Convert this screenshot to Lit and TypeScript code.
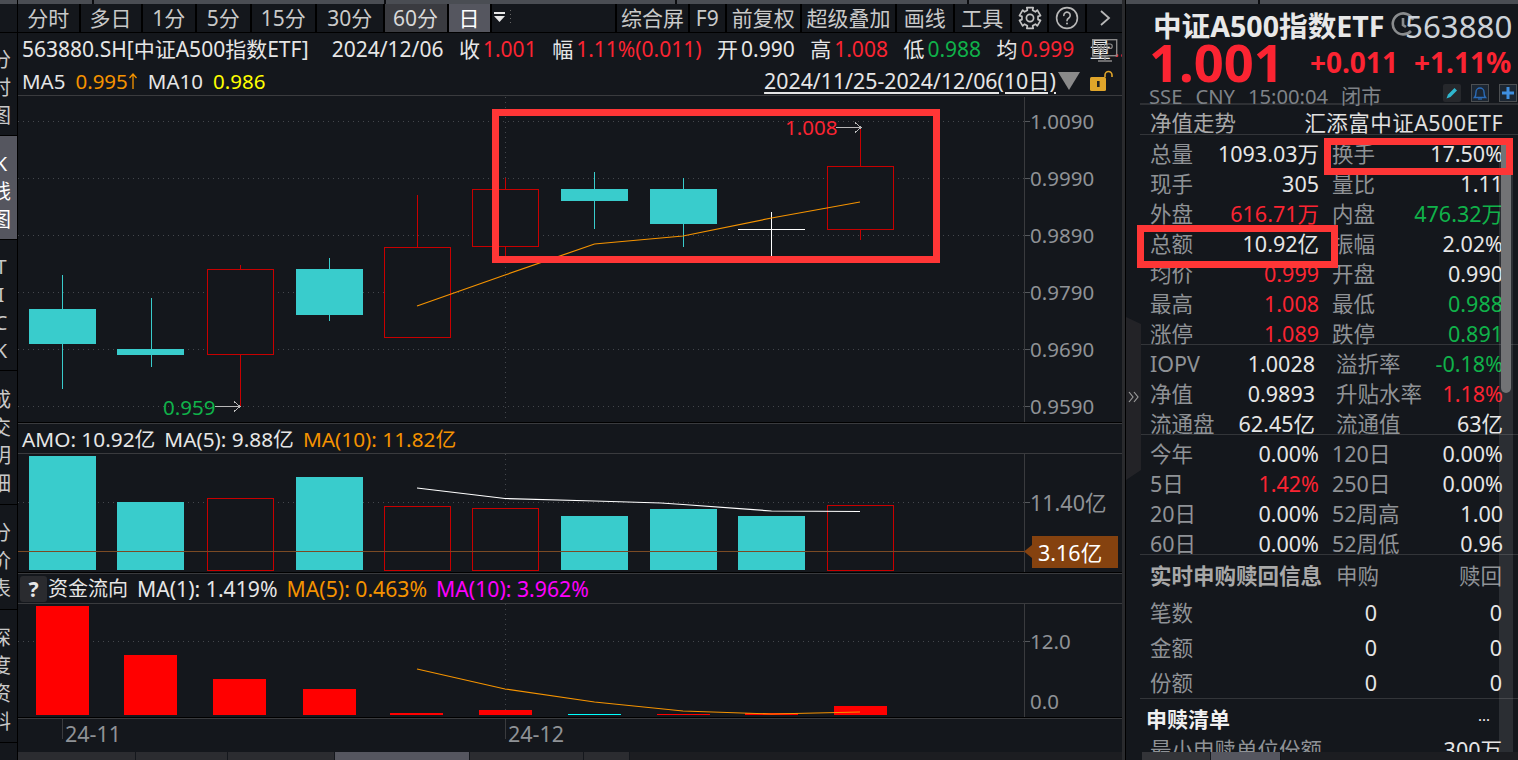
import { LitElement, html, css, svg } from "lit";
import { customElement } from "lit/decorators.js";

const RED = "#c80000";
const TEAL = "#39cccc";
const CX = [62.5, 151, 240, 329.5, 417, 505.5, 594.5, 683.5, 771.5, 860.5];
type Candle = { kind: string; top: number; bot: number; hi: number; lo: number };
const candles: Candle[] = [
  { kind: "t", top: 309, bot: 344, hi: 275, lo: 389 },
  { kind: "t", top: 349, bot: 355, hi: 298, lo: 367 },
  { kind: "r", top: 269, bot: 354, hi: 265, lo: 407 },
  { kind: "t", top: 269, bot: 315, hi: 258, lo: 321 },
  { kind: "r", top: 247, bot: 337, hi: 195, lo: 337 },
  { kind: "r", top: 189, bot: 246, hi: 178, lo: 258 },
  { kind: "t", top: 189, bot: 201, hi: 172, lo: 229 },
  { kind: "t", top: 189, bot: 224, hi: 178, lo: 247 },
  { kind: "w", top: 229, bot: 229, hi: 212, lo: 256 },
  { kind: "r", top: 166, bot: 229, hi: 127, lo: 240 },
];
const vols: [string, number][] = [
  ["t", 456], ["t", 502], ["r", 498], ["t", 477], ["r", 506], ["r", 508], ["t", 516], ["t", 509], ["t", 516], ["r", 505],
];
const funds: [string, number][] = [
  ["#ff0000", 606], ["#ff0000", 655], ["#ff0000", 679], ["#ff0000", 689], ["#ff0000", 713],
  ["#ff0000", 710], ["#00ffff", 714], ["#ff0000", 714], ["#ff0000", 713], ["#ff0000", 706],
];
const tabsL: [string, number, string][] = [
  ["分时", 62.5, ""], ["多日", 62, ""], ["1分", 54.5, ""], ["5分", 54.5, ""], ["15分", 65.5, ""], ["30分", 67.5, ""], ["60分", 64, "hover"], ["日", 43, "sel"],
];
const tabsR: [string, number][] = [
  ["综合屏", 75], ["F9", 36.5], ["前复权", 75.5], ["超级叠加", 95], ["画线", 57.5], ["工具", 57.5],
];
const sideItems: [string[], number, boolean][] = [
  [["分", "时", "图"], 103, false],
  [["K", "线", "图"], 104, true],
  [["T", "I", "C", "K"], 131, false],
  [["成", "交", "明", "细"], 134, false],
  [["分", "价", "表"], 105, false],
  [["深", "度", "资", "料"], 133, false],
];
type Cell = [string, string, string];
const sec1: [Cell, Cell][] = [
  [["总量", "1093.03万", ""], ["换手", "17.50%", ""]],
  [["现手", "305", ""], ["量比", "1.11", ""]],
  [["外盘", "616.71万", "up"], ["内盘", "476.32万", "dn"]],
  [["总额", "10.92亿", ""], ["振幅", "2.02%", ""]],
  [["均价", "0.999", "up"], ["开盘", "0.990", ""]],
  [["最高", "1.008", "up"], ["最低", "0.988", "dn"]],
  [["涨停", "1.089", "up"], ["跌停", "0.891", "dn"]],
];
const sec2: [Cell, Cell][] = [
  [["IOPV", "1.0028", ""], ["溢折率", "-0.18%", "dn"]],
  [["净值", "0.9893", ""], ["升贴水率", "1.18%", "up"]],
  [["流通盘", "62.45亿", ""], ["流通值", "63亿", ""]],
];
const sec3: [Cell, Cell][] = [
  [["今年", "0.00%", ""], ["120日", "0.00%", ""]],
  [["5日", "1.42%", "up"], ["250日", "0.00%", ""]],
  [["20日", "0.00%", ""], ["52周高", "1.00", ""]],
  [["60日", "0.00%", ""], ["52周低", "0.96", ""]],
];

function gearPath(): string {
  const pts: string[] = [];
  const teeth = 6;
  for (let i = 0; i < teeth; i++) {
    const a = (i * 2 * Math.PI) / teeth - Math.PI / 2;
    const w = 0.3;
    const gap = Math.PI / teeth;
    const p = (r: number, t: number) => `${(12 + r * Math.cos(t)).toFixed(2)} ${(12 + r * Math.sin(t)).toFixed(2)}`;
    pts.push(p(8.2, a - gap * 0.62), p(10.8, a - w), p(10.8, a + w), p(8.2, a + gap * 0.62));
  }
  return "M" + pts.join("L") + "Z";
}

@customElement("app-root")
export class AppRoot extends LitElement {
  static styles = css`
    :host { display: block; width: 1518px; height: 760px; overflow: hidden; background: #14171c; }
    * { box-sizing: border-box; }
    .app { position: relative; width: 1518px; height: 760px; display: grid; grid-template-columns: 18px 1104px 3px 393px; background: #14171c; color: #e6e6e6; font: 21px/30px "Noto Sans", "Noto Sans CJK SC", "DejaVu Sans", sans-serif; overflow: hidden; }
    .up { color: #fb2432; } .dn { color: #10b24a; } .or { color: #f59300; } .ye { color: #ffff00; } .ma { color: #ff00ff; } .mut { color: #8f9296; }

    .strip { height: 4px; display: flex; gap: 2px; background: #0c0d10; }
    .strip i { display: block; height: 3.5px; background: #4a4d53; flex: none; }
    .s1 { width: 74px; } .s2 { width: 290px; } .s3 { width: 289px; } .s4 { width: 290px; } .s5 { flex: 1 !important; }
    .side { display: flex; flex-direction: column; overflow: hidden; border-right: 1px solid #000; }
    .side .strip i { width: 100%; }
    .side .top { height: 29px; border-bottom: 1px solid #000; }
    .item { display: flex; flex-direction: column; align-items: center; justify-content: center; border-bottom: 1px solid #000; padding-top: 8px; color: #c9c9c9; width: 18px; }
    .item.sel { background: #55565f; color: #fff; }
    .item span { display: block; width: 20px; margin-left: -16px; text-align: center; line-height: 28px; font-size: 20px; flex: none; }

    .main { display: flex; flex-direction: column; min-width: 0; }
    .tabs { height: 29px; display: flex; align-items: stretch; border-bottom: 1px solid #000; font-size: 21px; color: #c9c9c9; }
    .tab { flex: none; display: flex; align-items: center; justify-content: center; border-right: 2px solid #000; line-height: 29px; white-space: nowrap; }
    .tab.hover { background: #3a3b40; color: #d8d8d8; }
    .tab.sel { background: #55565f; color: #fff; }
    .drop { width: 24px; flex: none; display: flex; align-items: center; justify-content: center; }
    .drop svg, .iconTab svg { display: block; }
    .rightTabs { margin-left: auto; display: flex; }
    .rightTabs .tab:first-child { border-left: 2px solid #000; }
    .info { height: 33px; display: flex; align-items: center; padding: 0 0 2px 4px; white-space: nowrap; overflow: hidden; position: relative; }
    .kv { margin-left: 15.5px; display: flex; gap: 3px; }
    .date { margin-left: 23px; }
    .marow { height: 30px; display: flex; align-items: center; padding: 0 0 0 4px; border-bottom: 1px solid #3a3b3e; white-space: nowrap; position: relative; font-size: 20.5px; }
    .gap { margin-left: 10px; }
    .arr { display: block; flex: none; }
    .range { margin-left: auto; display: flex; align-items: center; }
    .range u { text-underline-offset: 3px; font-size: 21.3px; }
    .range svg { display: block; margin-left: 2px; }
    .range .lock { margin: 0 8px 0 10px; }
    svg.plot { display: block; width: 1104px; flex: none; }
    svg.plot text { font: 20.5px "Noto Sans", "Noto Sans CJK SC", sans-serif; }
    svg.plot text.wide { font-size: 21.5px; }
    .p1 { height: 326px; }
    .sep { height: 2px; flex: none; background: linear-gradient(#000 50%, #3a3b3e 50%); }
    .head { height: 30px; flex: none; display: flex; align-items: center; padding-left: 4px; border-bottom: 1px solid #3a3b3e; white-space: nowrap; gap: 9px; font-size: 21.2px; }
    .head.amo { font-size: 20.8px; }
    .head .cjk { font-size: 20px; }
    .q { width: 27px; height: 26px; border-radius: 3px; background: #2a2b2f; display: flex; align-items: center; justify-content: center; font-weight: 700; margin-left: -2px; margin-right: -8px; }
    .p2 { height: 118px; }
    .p3 { height: 113px; }
    .dates { height: 33px; flex: none; }
    .bar { height: 8px; display: flex; gap: 1px; background: #14171c; flex: none; }
    .bar i { display: block; background: #2b2c30; flex: none; }
    .bar .on { background: #55565f; }
    .bar .rest { flex: 1; background: #1c1d21; }
    .b1 { width: 117px; } .b2 { width: 91px; } .b3 { width: 106px; } .b4 { width: 134px; } .b5 { width: 113px; } .b6 { width: 45px; }

    .gutter { background: #2a2b2e; }
    .panel { position: relative; overflow: hidden; display: flex; flex-direction: column; border-left: 1px solid #000; font-size: 21.5px; }
    .panel > .strip i { width: 132px; }
    .title { height: 40px; flex: none; margin-left: 27px; display: flex; align-items: center; white-space: nowrap; position: relative; padding-top: 4px; }
    .title b { font-size: 28.6px; color: #e8e8e8; line-height: 40px; }
    .title .code { position: absolute; left: 252px; top: 2px; font-size: 31.3px; line-height: 40px; color: #cdd2d8; }
    .title svg { position: absolute; left: 238px; top: 8px; }
    .price { height: 36px; flex: none; margin-left: 23px; display: flex; align-items: center; font-weight: 700; color: #fb2432; white-space: nowrap; }
    .price .big { font-size: 52.5px; line-height: 36px; width: 164px; }
    .price .sm { font-size: 28px; line-height: 36px; width: 106px; }
    .sse { height: 25px; flex: none; margin-left: 14px; padding: 10px 0 0 9px; border-bottom: 2px solid #2e3034; display: flex; align-items: center; color: #7f8388; font-size: 20.2px; line-height: 20px; white-space: nowrap; gap: 13px; position: relative; }
    .tools { position: absolute; top: 4px; left: 303px; display: flex; gap: 10px; }
    .tools svg { display: block; }
    .nav { height: 30px; flex: none; margin-left: 14px; padding: 7px 15px 0 10px; display: flex; justify-content: space-between; align-items: center; border-bottom: 1px solid #333539; color: #a8a8a8; white-space: nowrap; }
    .nav span:last-child { color: #e0e0e0; letter-spacing: 0.45px; }
    .sec { margin-left: 14px; padding: 2px 15px 0 10px; border-bottom: 1px solid #333539; flex: none; }
    .h1 { height: 210px; } .h2 { height: 90px; } .h3 { height: 120px; }
    .row { display: grid; grid-template-columns: 169px 171px; column-gap: 13px; height: 30px; line-height: 33px; white-space: nowrap; }
    .h2 .row { grid-template-columns: 165px 167px; column-gap: 21px; }
    .cell { display: flex; justify-content: space-between; }
    .cell span:first-child { color: #8f9296; }
    .sub { height: 144px; margin-left: 14px; padding: 0 16px 0 10px; border-bottom: 1px solid #333539; flex: none; }
    .subrow { display: grid; grid-template-columns: 186px 41px 125px; height: 35px; align-items: center; text-align: right; color: #e6e6e6; white-space: nowrap; line-height: 41px; }
    .subrow span:first-child { text-align: left; color: #8f9296; }
    .subhead { height: 37px; color: #8f9296; }
    .subhead span:first-child { font-weight: 700; color: #a8a8a8; }
    .list { height: 34px; margin-left: 14px; padding: 7px 28px 0 6px; display: flex; justify-content: space-between; align-items: center; flex: none; font-weight: 700; font-size: 21px; color: #f0f0f0; }
    .list em { font-style: normal; font-size: 15px; font-weight: 400; }
    .last { margin-left: 14px; padding: 2px 16px 0 10px; display: flex; justify-content: space-between; flex: none; }
    .last span:first-child { color: #8f9296; }
    .pbar { position: absolute; left: 16px; right: 0; bottom: 0; }
    .pbar i:nth-child(1) { width: 68px; background: #333438; }
    .pbar i:nth-child(2) { width: 69px; }
    .track { position: absolute; top: 138px; left: 373px; width: 14px; bottom: 8px; background: rgba(255,255,255,0.1); }
    .thumb { position: absolute; top: 7px; left: 2px; width: 10px; height: 248px; border-radius: 0 0 5px 5px; background: #727375; }
    .notch { position: absolute; left: 0; top: 317px; display: block; }

    .box { position: absolute; border: 7px solid #ff3636; pointer-events: none; }
    .bx1 { left: 492px; top: 109px; width: 448px; height: 154px; }
    .bx2 { left: 1324px; top: 138px; width: 189px; height: 37px; }
    .bx3 { left: 1137px; top: 225px; width: 201px; height: 43px; }
    .wp { position: absolute; left: 1092px; top: 39px; display: block; }
  `;

  private grid(ys: number[], x2 = 1024) {
    return ys.map(
      (y) => svg`<line x1="18" x2=${x2} y1=${y + 0.5} y2=${y + 0.5} stroke="#44474c" stroke-dasharray="1 4"/>
        <line x1="1024" x2="1030" y1=${y + 0.5} y2=${y + 0.5} stroke="#55585c"/>`
    );
  }
  private vline(y1: number, y2: number) {
    return svg`<line x1="505.5" x2="505.5" y1=${y1} y2=${y2} stroke="#44474c" stroke-dasharray="1 4"/>
      <line x1="1024.5" x2="1024.5" y1=${y1} y2=${y2} stroke="#3a3b3e"/>`;
  }
  private arrow(x1: number, x2: number, y: number) {
    return svg`<path d="M${x1} ${y + 0.5}H${x2}M${x2 - 6} ${y - 4.5}L${x2} ${y + 0.5}L${x2 - 6} ${y + 5.5}" fill="none" stroke="#b8b8b8"/>`;
  }
  private axis(y: number, t: string) {
    return svg`<text x="1030" y=${y + 7.5} fill="#8f9296">${t}</text>`;
  }

  private candleChart() {
    return html`<svg class="plot p1" viewBox="18 96 1104 326" shape-rendering="crispEdges">
      ${this.grid([121, 178, 235, 292, 349, 406])}
      ${this.vline(97, 422)}
      ${candles.map((c, i) => {
        const x = CX[i];
        const lx = Math.floor(x) + 0.5;
        const col = c.kind === "t" ? TEAL : c.kind === "w" ? "#fff" : RED;
        return svg`<line x1=${lx} x2=${lx} y1=${c.hi} y2=${c.lo} stroke=${col}/>
        ${c.kind === "t"
          ? svg`<rect x=${Math.floor(x - 33.5)} y=${c.top} width="67" height=${c.bot - c.top} fill=${TEAL}/>`
          : c.kind === "w"
          ? svg`<line x1=${x - 33.5} x2=${x + 33.5} y1=${c.top + 0.5} y2=${c.top + 0.5} stroke="#fff"/>`
          : svg`<rect x=${Math.floor(x - 33) + 0.5} y=${c.top + 0.5} width="66" height=${c.bot - c.top} fill="#14171c" stroke=${RED}/>`}`;
      })}
      <polyline shape-rendering="auto" points="417,306 505,275 594.5,244 683,236 771.5,218 860,202" fill="none" stroke="#f59300" stroke-width="1.2"/>
      <text x="785" y="134.500" fill="#fb2432">1.008</text>
      ${this.arrow(836, 861, 127)}
      <text x="163" y="414.500" fill="#10b24a">0.959</text>
      ${this.arrow(215, 240, 406)}
      ${this.axis(121, "1.0090")}${this.axis(178, "0.9990")}${this.axis(235, "0.9890")}
      ${this.axis(292, "0.9790")}${this.axis(349, "0.9690")}${this.axis(406, "0.9590")}
    </svg>`;
  }

  private volChart() {
    return html`<svg class="plot p2" viewBox="18 454 1104 118" shape-rendering="crispEdges">
      ${this.grid([502])}
      ${this.vline(454, 572)}
      ${vols.map(([k, top], i) => {
        const x = CX[i];
        return k === "t"
          ? svg`<rect x=${Math.floor(x - 33.5)} y=${top} width="67" height=${570 - top} fill=${TEAL}/>`
          : svg`<rect x=${Math.floor(x - 33) + 0.5} y=${top + 0.5} width="66" height=${569.5 - top} fill="#14171c" stroke=${RED}/>`;
      })}
      <polyline shape-rendering="auto" points="417,488 505,498.5 594.5,501 661,503 683,504.5 771.5,511 860,511.5" fill="none" stroke="#fff" stroke-width="1.2"/>
      <line x1="18" x2="1024" y1="551.5" y2="551.5" stroke="#7b4a24"/>
      <text class="wide" x="1030" y="510.500" fill="#8f9296">11.40亿</text>
      <path d="M1024 551.5L1032 545V536H1118V568H1032V558Z" fill="#85420f" shape-rendering="auto"/>
      <text class="wide" x="1038" y="560.500" fill="#fff">3.16亿</text>
    </svg>`;
  }

  private fundChart() {
    return html`<svg class="plot p3" viewBox="18 604 1104 113" shape-rendering="crispEdges">
      ${this.grid([641])}
      ${this.vline(604, 717)}
      ${funds.map(([c, top], i) => svg`<rect x=${Math.floor(CX[i] - 26.5)} y=${top} width="53" height=${715 - top} fill=${c}/>`)}
      <polyline shape-rendering="auto" points="417,669 505,689 594.5,702 683,711 771.5,714 860,712" fill="none" stroke="#f59300" stroke-width="1.2"/>
      ${this.axis(641, "12.0")}${this.axis(701, "0.0")}
    </svg>`;
  }

  private dateAxis() {
    return html`<svg class="plot dates" viewBox="18 719 1104 33" shape-rendering="crispEdges">
      <line x1="62.5" x2="62.5" y1="719" y2="739" stroke="#3a3b3e"/>
      <line x1="505.5" x2="505.5" y1="719" y2="739" stroke="#3a3b3e"/>
      <text class="wide" x="65" y="742" fill="#8f9296">24-11</text>
      <text class="wide" x="508" y="742" fill="#8f9296">24-12</text>
    </svg>`;
  }

  private rows(data: [Cell, Cell][]) {
    return data.map(
      (r) => html`<div class="row">${r.map((c) => html`<div class="cell"><span>${c[0]}</span><span class=${c[2]}>${c[1]}</span></div>`)}</div>`
    );
  }

  render() {
    return html`<div class="app">
      <div class="side">
        <div class="strip"><i></i></div>
        <div class="top"></div>
        ${sideItems.map(
          ([chars, h, sel]) => html`<div class="item ${sel ? "sel" : ""}" style="height:${h}px">${chars.map((c) => html`<span>${c}</span>`)}</div>`
        )}
      </div>

      <div class="main">
        <div class="strip"><i class="s1"></i><i class="s2"></i><i class="s3"></i><i class="s4"></i><i class="s5"></i></div>
        <div class="tabs">
          ${tabsL.map(([t, w, c]) => html`<div class="tab ${c}" style="width:${w}px">${t}</div>`)}
          <div class="drop">
            <svg width="22" height="20" viewBox="0 0 22 20" shape-rendering="crispEdges">
              <rect x="1" y="4" width="11" height="2" fill="#e6e6e6"/>
              <path d="M1 8H12L6.5 14Z" fill="#e6e6e6" shape-rendering="auto"/>
              <line x1="17.5" x2="17.5" y1="2" y2="18" stroke="#666" stroke-dasharray="1 3"/>
            </svg>
          </div>
          <div class="rightTabs">
            ${tabsR.map(([t, w]) => html`<div class="tab" style="width:${w}px">${t}</div>`)}
            <div class="tab iconTab" style="width:37px">
              <svg width="24" height="24" viewBox="0 0 24 24" fill="none" stroke="#c4c4c4" stroke-width="1.7" stroke-linejoin="round"><path d=${gearPath()}/><circle cx="12" cy="12" r="3.6"/></svg>
            </div>
            <div class="tab iconTab" style="width:38px">
              <svg width="24" height="24" viewBox="0 0 24 24" fill="none" stroke="#b8b8b8" stroke-width="1.6"><circle cx="12" cy="12" r="10.4"/><path d="M8.8 9.4a3.2 3.2 0 1 1 5 2.6c-1.2.8-1.8 1.4-1.8 2.8" stroke-linecap="round"/><circle cx="12" cy="17.6" r="1" fill="#b8b8b8" stroke="none"/></svg>
            </div>
            <div class="tab iconTab" style="width:35px;border-right:0">
              <svg width="14" height="20" viewBox="0 0 14 20" fill="none" stroke="#b8b8b8" stroke-width="1.8"><path d="M3 3L11 10L3 17"/></svg>
            </div>
          </div>
        </div>
        <div class="info">
          <span>563880.SH[中证A500指数ETF]</span>
          <span class="date">2024/12/06</span>
          <span class="kv"><span>收</span><span class="up">1.001</span></span>
          <span class="kv"><span>幅</span><span class="up">1.11%(0.011)</span></span>
          <span class="kv"><span>开</span><span>0.990</span></span>
          <span class="kv"><span>高</span><span class="up">1.008</span></span>
          <span class="kv"><span>低</span><span class="dn">0.988</span></span>
          <span class="kv"><span>均</span><span class="up">0.999</span></span>
          <span class="kv"><span>量</span><span class="up">..</span></span>
        </div>
        <div class="marow">
          <span>MA5</span><span class="or gap">0.995</span>
          <svg class="arr" width="10" height="20" viewBox="0 0 10 20" fill="none" stroke="#f59300" stroke-width="1.3"><path d="M5 18V3M1.500 7L5 3L8.500 7"/></svg>
          <span class="gap">MA10</span><span class="ye gap">0.986</span>
          <span class="range">
            <u>2024/11/25-2024/12/06(10日)</u>
            <svg width="22" height="18" viewBox="0 0 22 18"><path d="M0 0H22L11 18Z" fill="#8a8a8a"/></svg>
            <svg class="lock" width="24" height="22" viewBox="0 0 24 22"><path d="M15 7V5a3.5 3.5 0 0 1 7 0V7" fill="none" stroke="#e0a52a" stroke-width="1.6"/><rect x="0" y="7" width="16" height="14" rx="1.5" fill="#e0a52a"/><rect x="7" y="11" width="2.6" height="6" fill="#222"/></svg>
          </span>
        </div>
        ${this.candleChart()}
        <div class="sep"></div>
        <div class="head amo">
          <span>AMO: 10.92亿</span><span>MA(5): 9.88亿</span><span class="or">MA(10): 11.82亿</span>
        </div>
        ${this.volChart()}
        <div class="sep"></div>
        <div class="head">
          <span class="q">?</span><span class="cjk">资金流向</span><span>MA(1): 1.419%</span><span class="or">MA(5): 0.463%</span><span class="ma">MA(10): 3.962%</span>
        </div>
        ${this.fundChart()}
        <div class="sep"></div>
        ${this.dateAxis()}
        <div class="bar"><i class="b1"></i><i class="b2"></i><i class="b3"></i><i class="b4 on"></i><i class="b5"></i><i class="b6"></i><i class="rest"></i></div>
      </div>

      <div class="gutter"></div>

      <div class="panel">
        <div class="strip"><i></i><i class="s5"></i></div>
        <div class="title">
          <b>中证A500指数ETF</b>
          <svg width="24" height="24" viewBox="0 0 24 24" fill="none" stroke="#8a8c8e" stroke-width="2.6"><path d="M22 8a10.500 10.500 0 1 0-2 11"/><path d="M12 6v7l3 2"/></svg>
          <span class="code">563880</span>
        </div>
        <div class="price"><span class="big">1.001</span><span class="sm">+0.011</span><span class="sm">+1.11%</span></div>
        <div class="sse">
          <span>SSE</span><span>CNY</span><span>15:00:04</span><span>闭市</span>
          <span class="tools">
            <svg width="18" height="18" viewBox="0 0 18 18"><rect width="18" height="18" rx="2" fill="#26282c"/><path d="M3.5 14.5L5 10.5L11.5 4L14 6.5L7.5 13Z" fill="#2fb7cf"/></svg>
            <svg width="18" height="18" viewBox="0 0 18 18"><rect x=".5" y=".5" width="17" height="17" fill="#1d2733" stroke="#4c4f52"/><path d="M3.5 13.5C5 12 5 10 5 8a4 4 0 0 1 8 0c0 2 0 4 1.500 5.500Z" fill="none" stroke="#2b6cb8" stroke-width="1.4"/><path d="M7 15h4" stroke="#2b6cb8" stroke-width="1.2"/></svg>
            <svg width="18" height="18" viewBox="0 0 18 18"><rect x=".5" y=".5" width="17" height="17" fill="#1d2733" stroke="#4c4f52"/><path d="M3 7.500H7.500V3H10.500V7.500H15V10.500H10.500V15H7.500V10.500H3Z" fill="#3f8fe0"/></svg>
          </span>
        </div>
        <div class="nav"><span>净值走势</span><span>汇添富中证A500ETF</span></div>
        <div class="sec h1">${this.rows(sec1)}</div>
        <div class="sec h2">${this.rows(sec2)}</div>
        <div class="sec h3">${this.rows(sec3)}</div>
        <div class="sub">
          <div class="subrow subhead"><span>实时申购赎回信息</span><span>申购</span><span>赎回</span></div>
          <div class="subrow"><span>笔数</span><span>0</span><span>0</span></div>
          <div class="subrow"><span>金额</span><span>0</span><span>0</span></div>
          <div class="subrow"><span>份额</span><span>0</span><span>0</span></div>
        </div>
        <div class="list"><span>申赎清单</span><em>···</em></div>
        <div class="last"><span>最小申赎单位份额</span><span>300万</span></div>
        <div class="track"><div class="thumb"></div></div>
        <div class="bar pbar"><i></i><i class="on"></i><i class="rest"></i></div>
        <svg class="notch" width="15" height="163" viewBox="0 0 15 163">
          <path d="M0 0L15 7V153L0 163Z" fill="#232327"/>
          <path d="M3 75L7 80L3 85M8 75L12 80L8 85" fill="none" stroke="#9a9a9a" stroke-width="1.2"/>
        </svg>
      </div>

      <div class="box bx1"></div>
      <div class="box bx2"></div>
      <div class="box bx3"></div>
      <svg class="wp" width="26" height="24" viewBox="0 0 26 24" fill="none" stroke="#8a8a8a" stroke-width="1.400"><rect x=".7" y=".7" width="24" height="16"/><path d="M13 17v4M6 22h14"/><path d="M5 5l2 8 2-6 2 6 2-8M15 13V5h3a2.200 2.200 0 0 1 0 4.500h-3" stroke-width="1.200"/></svg>
    </div>`;
  }
}
